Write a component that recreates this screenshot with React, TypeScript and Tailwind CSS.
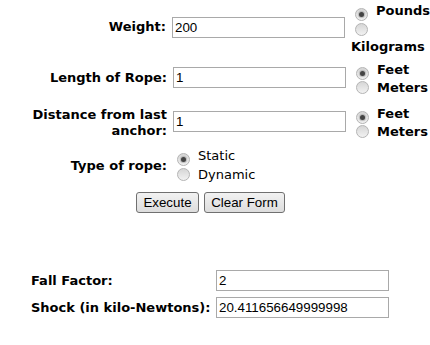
import React from "react";

const label = "font-['DejaVu_Sans',Verdana,sans-serif] font-bold text-[13px] leading-[16px] text-black";
const inputCls =
  "box-border w-[173px] h-[21px] border border-[#a9a9a9] bg-white pl-[2px] pr-[2px] font-['Liberation_Sans',Arial,sans-serif] text-[13.33px] text-black outline-none";

function Radio({ checked }: { checked?: boolean }) {
  return (
    <span className="relative inline-flex w-[13px] h-[13px] shrink-0 items-center justify-center rounded-full border border-[#b4b4b4] bg-gradient-to-b from-[#d6d6d6] to-[#f2f2f2]">
      {checked && (
        <span className="w-[5px] h-[5px] rounded-full bg-[#444444] shadow-[0_0_1px_1px_rgba(140,140,140,0.5)]" />
      )}
    </span>
  );
}

function RadioLine({
  checked,
  text,
  h,
  bold = true,
  gap = "ml-[8px]",
}: {
  checked?: boolean;
  text: string;
  h: string;
  bold?: boolean;
  gap?: string;
}) {
  return (
    <div className={`flex items-center ${h}`}>
      <span className="ml-[4px]">
        <Radio checked={checked} />
      </span>
      <span
        className={`${gap} font-['DejaVu_Sans',Verdana,sans-serif] text-[13px] leading-[16px] text-black ${
          bold ? "font-bold" : "font-normal"
        }`}
      >
        {text}
      </span>
    </div>
  );
}

export default function App() {
  return (
    <div className="w-[430px] h-[345px] bg-white relative overflow-hidden">
      {/* Row 1 */}
      <div className="flex items-start h-[56px]">
        <div className={`w-[167px] text-right mt-[19px] ${label}`}>Weight:</div>
        <input className={`ml-[6px] mt-[17px] ${inputCls}`} defaultValue="200" />
        <div className="ml-[6px] flex flex-col mt-[1px]">
          <RadioLine checked text="Pounds" h="h-[20px]" />
          <div className="flex items-center h-[18px]">
            <span className="ml-[4px]">
              <Radio />
            </span>
          </div>
          <div className={`h-[16px] ${label}`}>Kilograms</div>
        </div>
      </div>

      {/* Row 2 */}
      <div className="flex items-start h-[44px] mt-[4px]">
        <div className={`w-[167px] text-right mt-[10px] ${label}`}>Length of Rope:</div>
        <input className={`ml-[6px] mt-[7px] ${inputCls}`} defaultValue="1" />
        <div className="ml-[6px] flex flex-col mt-[1px]">
          <RadioLine checked text="Feet" h="h-[18px]" />
          <RadioLine text="Meters" h="h-[18px]" />
        </div>
      </div>

      {/* Row 3 */}
      <div className="flex items-start h-[42px]">
        <div className={`w-[167px] text-right mt-[3px] ${label}`}>
          Distance from last
          <br />
          anchor:
        </div>
        <input className={`ml-[6px] mt-[7px] ${inputCls}`} defaultValue="1" />
        <div className="ml-[6px] flex flex-col mt-[1px]">
          <RadioLine checked text="Feet" h="h-[18px]" />
          <RadioLine text="Meters" h="h-[18px]" />
        </div>
      </div>

      {/* Row 4 */}
      <div className="flex items-start h-[46px]">
        <div className={`w-[167px] text-right mt-[12px] ${label}`}>Type of rope:</div>
        <div className="ml-[6px] flex flex-col">
          <RadioLine checked text="Static" h="h-[19px]" bold={false} gap="ml-[8px]" />
          <RadioLine text="Dynamic" h="h-[19px]" bold={false} gap="ml-[8px]" />
        </div>
      </div>

      {/* Buttons */}
      <div className="flex w-[421px] justify-center gap-[5px]">
        <button className="box-border w-[63px] h-[21px] rounded-[3px] border border-[#707070] bg-gradient-to-b from-[#f2f2f2] to-[#dddddd] font-['Liberation_Sans',Arial,sans-serif] text-[13.33px] text-black leading-[19px]">
          Execute
        </button>
        <button className="box-border w-[81px] h-[21px] rounded-[3px] border border-[#707070] bg-gradient-to-b from-[#f2f2f2] to-[#dddddd] font-['Liberation_Sans',Arial,sans-serif] text-[13.33px] text-black leading-[19px]">
          Clear Form
        </button>
      </div>

      {/* Results */}
      <div className="mt-[57px] ml-[31px] flex flex-col gap-[6px]">
        <div className="flex items-center h-[21px]">
          <div className={`w-[185px] ${label}`}>Fall Factor:</div>
          <input className={inputCls} defaultValue="2" />
        </div>
        <div className="flex items-center h-[21px]">
          <div className={`w-[185px] ${label}`}>Shock (in kilo-Newtons):</div>
          <input className={inputCls} defaultValue="20.411656649999998" />
        </div>
      </div>
    </div>
  );
}
